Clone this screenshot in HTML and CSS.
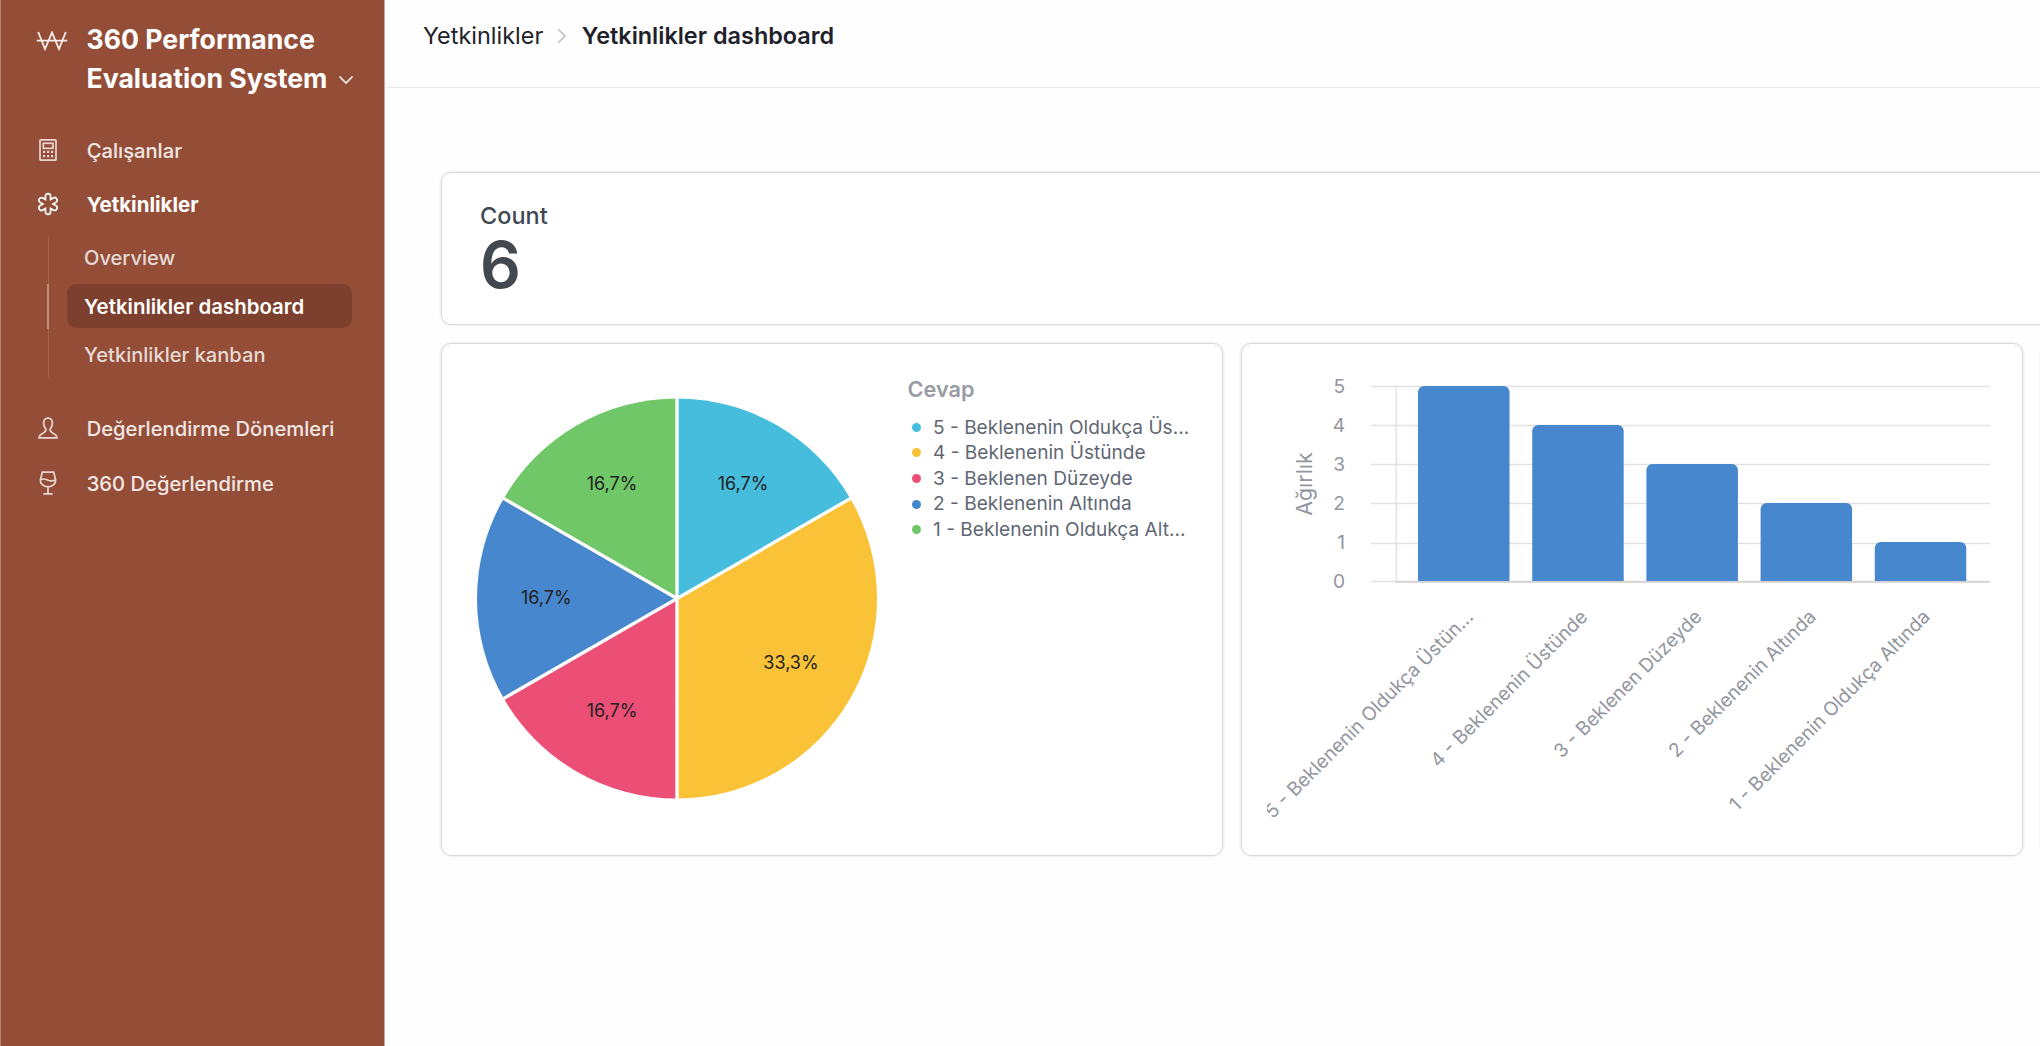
FILE: index.html
```
<!DOCTYPE html>
<html lang="tr">
  <head>
    <meta charset="UTF-8" />
    <meta name="viewport" content="width=device-width, initial-scale=1.0" />
    <title>Yetkinlikler dashboard</title>
    <link rel="stylesheet" href="styles.css">
  </head>
  <body>
    <aside class="sidebar">
      <div class="brand">
        <svg class="brand-icon" width="32" height="20" viewBox="0 0 32 20">
          <path d="M2.2 1 L9 18 L16 1.5 L23 18 L29.8 1 M0.8 9.7 H31.2" />
        </svg>
        <div class="brand-name">
          360 Performance<br />Evaluation System
          <svg class="chevron" width="16" height="10" viewBox="0 0 16 10">
            <path d="M1.5 1.5 L8 8 L14.5 1.5" />
          </svg>
        </div>
      </div>

      <nav>
        <a class="nav-item">
          <svg class="nav-icon" width="20" height="24" viewBox="0 0 20 24">
            <rect x="2" y="1.8" width="16" height="20.4" rx="1" />
            <rect x="5.3" y="5.3" width="9.6" height="5" />
            <path class="dots" d="M5 13.9h2.2M9 13.9h2.2M13 13.9h2.2M5 18.2h2.2M9 18.2h2.2M13 18.2h2.2" />
          </svg>
          <span>Çalışanlar</span>
        </a>
        <a class="nav-item open">
          <svg class="nav-icon" width="20" height="24" viewBox="0 0 20 24">
            <path d="M7.4 7.5 V4.2 a2.6 2.6 0 0 1 5.2 0 V7.5 L15.2 6 a2.55 2.55 0 0 1 2.6 4.4 L15 12 L17.8 13.6 a2.55 2.55 0 0 1 -2.6 4.4 L12.6 16.5 V19.8 a2.6 2.6 0 0 1 -5.2 0 V16.5 L4.8 18 a2.55 2.55 0 0 1 -2.6 -4.4 L5 12 L2.2 10.4 a2.55 2.55 0 0 1 2.6 -4.4 Z" />
          </svg>
          <span>Yetkinlikler</span>
        </a>
        <div class="sub-nav">
          <a class="sub-item"><span>Overview</span></a>
          <a class="sub-item active"><span>Yetkinlikler dashboard</span></a>
          <a class="sub-item"><span>Yetkinlikler kanban</span></a>
        </div>
        <a class="nav-item">
          <svg class="nav-icon" width="20" height="24" viewBox="0 0 20 24">
            <path d="M10 1.2 C6.6 1.2 5.4 3.4 5.6 6.6 C5.7 8.8 6.5 10.3 7.7 11.6 C8.2 13.4 7.8 14.6 6 15.6 C3.6 16.9 1 17.6 1 20.9 H19 C19 17.6 16.4 16.9 14 15.6 C12.2 14.6 11.8 13.4 12.3 11.6 C13.5 10.3 14.3 8.8 14.4 6.6 C14.6 3.4 13.4 1.2 10 1.2 Z" />
          </svg>
          <span>Değerlendirme Dönemleri</span>
        </a>
        <a class="nav-item">
          <svg class="nav-icon" width="20" height="24" viewBox="0 0 20 24">
            <path d="M4.3 1.2 H15.7 L17.6 8.6 C18.2 12.6 14.6 15.8 10 15.8 C5.4 15.8 1.8 12.6 2.4 8.6 Z M2.5 8.6 C6 7 8 8.6 10 9.3 C12.4 10.1 15 10 17.5 9 M10 15.8 V22.6 M5.4 22.8 H14.6" />
          </svg>
          <span>360 Değerlendirme</span>
        </a>
      </nav>
    </aside>

    <main>
      <header class="breadcrumb">
        <span>Yetkinlikler</span>
        <svg width="10" height="16" viewBox="0 0 10 16">
          <path d="M1.3 1.2 L8 8 L1.3 14.8" />
        </svg>
        <strong>Yetkinlikler dashboard</strong>
      </header>

      <div class="dashboard">
        <div class="card count-card">
          <div class="count-label">Count</div>
          <div class="count-value">6</div>
        </div>

        <div class="card pie-card">
          <svg class="pie" width="420" height="462" viewBox="0 0 420 462">
            <g class="slices">
              <path fill="#47bddd" d="M210 230.5 V30.5 A200 200 0 0 1 383.2 130.5 Z" />
              <path fill="#fac237" d="M210 230.5 L383.2 130.5 A200 200 0 0 1 210 430.5 Z" />
              <path fill="#ec4f76" d="M210 230.5 V430.5 A200 200 0 0 1 36.8 330.5 Z" />
              <path fill="#4787ce" d="M210 230.5 L36.8 330.5 A200 200 0 0 1 36.8 130.5 Z" />
              <path fill="#6fc767" d="M210 230.5 L36.8 130.5 A200 200 0 0 1 210 30.5 Z" />
            </g>
            <path class="dividers" d="M210 29 V432 M36 330.9 L384 130.1 M210 230.5 L36 130.1" />
            <g class="pie-labels">
              <text x="276" y="122">16,7%</text>
              <text x="324" y="301">33,3%</text>
              <text x="145" y="349">16,7%</text>
              <text x="79.3" y="236.3">16,7%</text>
              <text x="145" y="122">16,7%</text>
            </g>
          </svg>
          <div class="legend">
            <h3>Cevap</h3>
            <ul>
              <li class="cyan">5 - Beklenenin Oldukça Üs...</li>
              <li class="yellow">4 - Beklenenin Üstünde</li>
              <li class="pink">3 - Beklenen Düzeyde</li>
              <li class="blue">2 - Beklenenin Altında</li>
              <li class="green">1 - Beklenenin Oldukça Alt...</li>
            </ul>
          </div>
        </div>

        <div class="card bar-card">
          <svg class="bar-chart" width="731" height="462" viewBox="0 0 731 462">
            <path class="grid" d="M104 18.5 H723 M104 57.5 H723 M104 96.5 H723 M104 135.5 H723 M104 175.5 H723 M104 213.5 H723 M129.2 18.5 V213.5" />
            <g class="bars">
              <path d="M151 213.5 V24 a6 6 0 0 1 6 -6 h79.5 a6 6 0 0 1 6 6 V213.5 Z" />
              <path d="M265.2 213.5 V63 a6 6 0 0 1 6 -6 h79.5 a6 6 0 0 1 6 6 V213.5 Z" />
              <path d="M379.4 213.5 V102 a6 6 0 0 1 6 -6 h79.5 a6 6 0 0 1 6 6 V213.5 Z" />
              <path d="M493.6 213.5 V141 a6 6 0 0 1 6 -6 h79.5 a6 6 0 0 1 6 6 V213.5 Z" />
              <path d="M607.8 213.5 V180 a6 6 0 0 1 6 -6 h79.5 a6 6 0 0 1 6 6 V213.5 Z" />
            </g>
            <path class="axis" d="M129 213.8 H723" />
            <g class="axis-labels">
              <text x="78" y="25">5</text>
              <text x="78" y="64">4</text>
              <text x="78" y="103">3</text>
              <text x="78" y="142">2</text>
              <text x="78" y="181">1</text>
              <text x="78" y="220">0</text>
              <text transform="translate(207.4 250) rotate(-45)">5 - Beklenenin Oldukça Üstün...</text>
              <text transform="translate(321.6 250) rotate(-45)">4 - Beklenenin Üstünde</text>
              <text transform="translate(435.8 250) rotate(-45)">3 - Beklenen Düzeyde</text>
              <text transform="translate(550 250) rotate(-45)">2 - Beklenenin Altında</text>
              <text transform="translate(664.2 250) rotate(-45)">1 - Beklenenin Oldukça Altında</text>
            </g>
            <text class="axis-title" transform="translate(45.3 116) rotate(-90)">Ağırlık</text>
          </svg>
        </div>

        <div class="card"></div>
      </div>
    </main>
  </body>
</html>
```
FILE: styles.css
```
* {
  box-sizing: border-box;
}
body {
  font-family: Inter, sans-serif;
  margin: 0;
  display: flex;
  height: 100vh;
  overflow: hidden;
  background: #fefefe;
}
svg {
  fill: none;
}
.sidebar {
  width: 385px;
  flex-shrink: 0;
  background: #944e38;
  border-left: 1px solid #b38475;
  border-right: 1px solid #cfa99c;
  padding: 20px 32px 0 35px;
  color: #fff;
}
.brand {
  display: flex;
  height: 103px;
}
.brand-icon {
  margin: 10.5px 18.5px 0 0;
  stroke: #f8efec;
  stroke-width: 1.8;
  flex-shrink: 0;
}
.brand-name {
  font-size: 26.65px;
  font-weight: 700;
  line-height: 39px;
  white-space: nowrap;
}
.chevron {
  margin-left: 4px;
  vertical-align: 3px;
  stroke: #f8efec;
  stroke-width: 1.7;
}
.nav-item {
  display: flex;
  align-items: center;
  height: 54.3px;
  font-size: 20.2px;
  font-weight: 500;
  color: #f1e8e5;
}
.nav-icon {
  width: 20px;
  margin: 0 28.7px 0 2px;
  stroke: #e8d6d0;
  stroke-width: 1.7;
}
.nav-icon .dots {
  stroke-width: 2.2;
}
.nav-item.open {
  color: #fff;
  font-size: 20.5px;
  font-weight: 700;
}
.nav-item.open .nav-icon {
  stroke: #fff;
  stroke-width: 1.7;
}
.sub-nav {
  display: flex;
  flex-direction: column;
  gap: 4px;
  margin: 4px 0 25px 11px;
  padding-left: 20px;
  background: linear-gradient(#9f6453, #9f6453) 1px 0 / 1px 100% no-repeat;
}
.sub-item {
  position: relative;
  display: flex;
  align-items: center;
  height: 44.4px;
  padding-left: 17px;
  border-radius: 9px;
  font-size: 20.1px;
  font-weight: 500;
  color: #e6dad6;
}
.sub-item.active {
  background: #7e402e;
  color: #fff;
  font-size: 20.45px;
  font-weight: 600;
}
.sub-item.active::before {
  content: "";
  position: absolute;
  left: -20px;
  width: 2px;
  height: 45px;
  background: #bd8f81;
}
main {
  flex: 1;
  min-width: 0;
}
.breadcrumb {
  display: flex;
  align-items: center;
  height: 88px;
  padding: 0 0 17px 38px;
  border-bottom: 1px solid #e9e9ea;
  font-size: 23.45px;
  color: #1f222b;
}
.breadcrumb svg {
  margin: 2px 14.5px 0 14px;
  stroke: #bdbdc2;
  stroke-width: 1.6;
}
.breadcrumb strong {
  font-weight: 600;
}
.dashboard {
  display: grid;
  grid-template-columns: repeat(3, 782px);
  grid-template-rows: 153px 513px;
  gap: 18px;
  padding: 83.5px 0 0 56px;
}
.card {
  background: #fff;
  border: 1px solid #d9dadb;
  border-radius: 10px;
  box-shadow: 0 0 3px rgba(0, 0, 0, 0.12);
  padding: 24px 24px 24px 25px;
}
.count-card {
  grid-column: 1 / -1;
  padding: 28px 38px;
  color: #42484f;
}
.count-label {
  font-size: 23.5px;
  font-weight: 500;
  line-height: 30px;
}
.count-value {
  font-size: 64px;
  font-weight: 600;
  line-height: 67px;
}
.pie-card {
  display: flex;
}
.dividers {
  stroke: #fff;
  stroke-width: 3.3;
}
.pie-labels {
  font-size: 18px;
  text-anchor: middle;
  fill: #222;
}
.legend {
  padding: 7px 0 0 20.5px;
}
.legend h3 {
  margin: 0 0 12px;
  font-size: 21.7px;
  font-weight: 600;
  line-height: 28px;
  color: #979ba3;
}
.legend ul {
  list-style: none;
  margin: 0;
  padding: 0 0 0 4.5px;
}
.legend li {
  display: flex;
  align-items: center;
  gap: 12px;
  font-size: 19.1px;
  line-height: 25.6px;
  color: #5f6773;
  white-space: nowrap;
}
.legend li::before {
  content: "";
  width: 9px;
  height: 9px;
  border-radius: 50%;
}
.legend .cyan::before {
  background: #47bddd;
}
.legend .yellow::before {
  background: #fac237;
}
.legend .pink::before {
  background: #ec4f76;
}
.legend .blue::before {
  background: #4787ce;
}
.legend .green::before {
  background: #6fc767;
}
.bar-chart {
  display: block;
}
.grid {
  stroke: #e2e1e1;
  stroke-width: 1.3;
}
.bars {
  fill: #4787ce;
}
.axis {
  stroke: #d6d1d1;
  stroke-width: 1.7;
}
.axis-labels {
  font-size: 19.1px;
  text-anchor: end;
  fill: #92969e;
}
.axis-title {
  font-size: 21.4px;
  text-anchor: middle;
  fill: #92969e;
}
```
